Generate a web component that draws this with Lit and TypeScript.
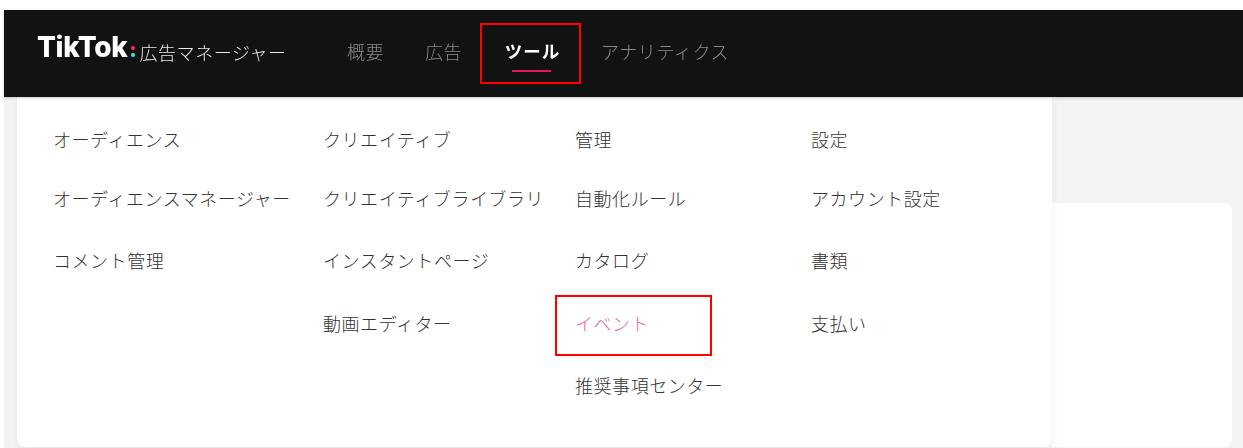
import { LitElement, css, html } from "lit";
import { customElement } from "lit/decorators.js";

const NAV = [
  { label: "概要", active: false },
  { label: "広告", active: false },
  { label: "ツール", active: true },
  { label: "アナリティクス", active: false }
];

const COLUMNS = [
  { width: 270, items: ["オーディエンス", "オーディエンスマネージャー", "コメント管理"] },
  { width: 252, items: ["クリエイティブ", "クリエイティブライブラリ", "インスタントページ", "動画エディター"] },
  { width: 236, items: ["管理", "自動化ルール", "カタログ", "イベント", "推奨事項センター"] },
  { width: 200, items: ["設定", "アカウント設定", "書類", "支払い"] }
];

@customElement("app-root")
export class AppRoot extends LitElement {
  protected render() {
    return html`
      <div class="frame">
        <header class="header">
          <div class="logo">
            <span class="wordmark">TikTok</span>
            <span class="dots"><i class="pink"></i><i class="cyan"></i></span>
            <span class="product">広告マネージャー</span>
          </div>
          <nav class="nav">
            ${NAV.map(
              (item) => html`
                <a class="nav-item ${item.active ? "active" : ""}">${item.label}</a>
              `
            )}
          </nav>
          <div class="callout callout-nav"></div>
        </header>
        <div class="body">
          <div class="menu">
            ${COLUMNS.map(
              (col) => html`
                <ul class="column" style="width:${col.width}px">
                  ${col.items.map(
                    (item) => html`
                      <li class="item ${item === "イベント" ? "selected" : ""}">${item}</li>
                    `
                  )}
                </ul>
              `
            )}
            <div class="callout callout-event"></div>
          </div>
          <div class="side">
            <div class="card"></div>
          </div>
        </div>
      </div>
    `;
  }

  static styles = css`
    :host {
      display: block;
      width: 1243px;
      height: 448px;
      overflow: hidden;
      background: #fff;
      font-family: "Noto Sans CJK JP", "Noto Sans", sans-serif;
    }

    .frame {
      box-sizing: border-box;
      height: 448px;
      padding: 10px 0 0 4px;
      display: flex;
      flex-direction: column;
      filter: blur(0.35px);
    }

    .header {
      position: relative;
      flex: none;
      height: 87px;
      display: flex;
      align-items: center;
      padding-left: 33px;
      background: #121212;
      box-shadow: 0 1px 3px rgba(0, 0, 0, 0.2);
      z-index: 2;
    }

    .logo {
      flex: none;
      display: flex;
      align-items: center;
      width: 310px;
      margin-top: -5px;
    }

    .wordmark {
      font-family: Inter, "Liberation Sans", sans-serif;
      font-size: 28px;
      font-weight: 800;
      letter-spacing: -0.35px;
      line-height: 32px;
      color: #fff;
      margin-top: -8px;
    }

    .dots {
      display: flex;
      flex-direction: column;
      gap: 3px;
      margin: 0 5px 0 3px;
    }

    .dots i {
      width: 4px;
      height: 4px;
      border-radius: 50%;
    }

    .pink {
      background: #fe2c55;
    }

    .cyan {
      background: #25f4ee;
    }

    .product {
      font-size: 18px;
      font-weight: 300;
      color: #e8e8e8;
      letter-spacing: 0.55px;
      margin-top: 2px;
    }

    .nav {
      display: flex;
      align-items: center;
      gap: 40.8px;
      margin-top: -6px;
    }

    .nav-item {
      position: relative;
      font-size: 18px;
      font-weight: 300;
      letter-spacing: 0.55px;
      line-height: 24px;
      color: #8a8a8a;
    }

    .nav-item.active {
      margin-left: 2px;
      color: #fff;
      font-weight: 700;
      font-size: 17.5px;
      letter-spacing: 1px;
    }

    .nav-item.active::after {
      content: "";
      position: absolute;
      left: 7px;
      right: 9px;
      bottom: -9px;
      height: 2px;
      background: #e8175d;
    }

    .body {
      flex: 1;
      display: flex;
      padding-left: 13px;
      background: #f3f3f3;
      min-height: 0;
    }

    .menu {
      position: relative;
      flex: none;
      box-sizing: border-box;
      width: 1035px;
      height: 350px;
      display: flex;
      padding: 16px 0 0 36px;
      background: #fff;
      border-radius: 0 0 8px 8px;
      box-shadow: 0 2px 8px rgba(0, 0, 0, 0.06);
      z-index: 1;
    }

    .column {
      flex: none;
      margin: 0;
      padding: 0;
      list-style: none;
    }

    .item {
      height: 62.5px;
      line-height: 62px;
      font-size: 18px;
      font-weight: 300;
      letter-spacing: 0.55px;
      color: #333;
      white-space: nowrap;
    }

    .item:first-child {
      height: 53.5px;
      line-height: 53px;
    }

    .item.selected {
      color: #f4628f;
    }

    .side {
      flex: 1;
      padding: 106px 11px 0 0;
    }

    .card {
      height: 244px;
      background: #fff;
      border-radius: 0 8px 8px 0;
    }

    .callout {
      position: absolute;
      box-sizing: border-box;
      border: 2px solid #f00;
      box-shadow: 0 0 0.5px #f00;
    }

    .callout-nav {
      left: 476px;
      top: 13px;
      width: 101px;
      height: 61px;
    }

    .callout-event {
      left: 538px;
      top: 198px;
      width: 157px;
      height: 61px;
    }
  `;
}
